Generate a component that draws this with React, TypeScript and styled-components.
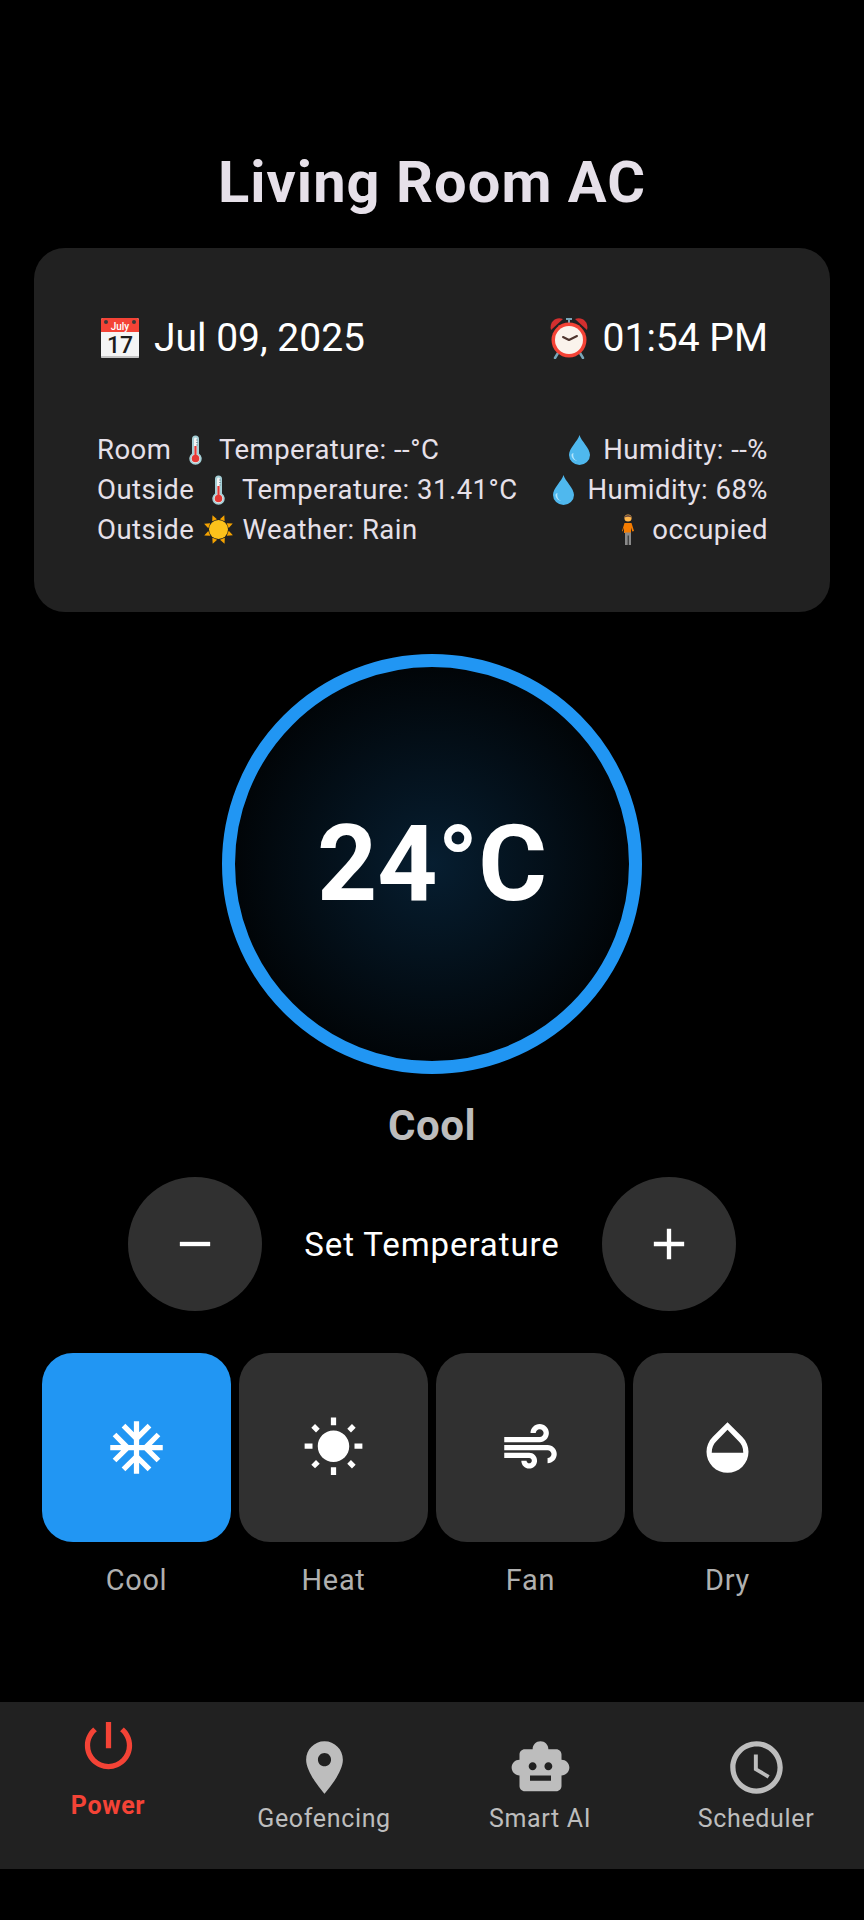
import type { FC, ReactNode } from 'react'
import styled, { createGlobalStyle } from 'styled-components'

const GlobalStyle = createGlobalStyle`
  html, body {
    margin: 0;
    padding: 0;
    background: #000;
  }
  body {
    font-family: Roboto, "Noto Sans", sans-serif;
  }
`

const ICONS = {
  snow: 'M22 11h-4.17l3.24-3.24-1.41-1.42L15 11h-2V9l4.66-4.66-1.42-1.41L13 6.17V2h-2v4.17L7.76 2.93 6.34 4.34 11 9v2H9L4.34 6.34 2.93 7.76 6.17 11H2v2h4.17l-3.24 3.24 1.41 1.42L9 13h2v2l-4.66 4.66 1.42 1.41L11 17.83V22h2v-4.17l3.24 3.24 1.42-1.41L13 15v-2h2l4.66 4.66 1.41-1.42L17.83 13H22z',
  sun: 'M6.76 4.84l-1.8-1.79-1.41 1.41 1.79 1.79 1.42-1.41zM4 10.5H1v2h3v-2zm9-9.95h-2V3.5h2V.55zm7.45 3.91l-1.41-1.41-1.79 1.79 1.41 1.41 1.79-1.79zm-3.21 13.7l1.79 1.8 1.41-1.41-1.8-1.79-1.4 1.4zM20 10.5v2h3v-2h-3zm-8-5c-3.31 0-6 2.69-6 6s2.69 6 6 6 6-2.69 6-6-2.69-6-6-6zm-1 16.95h2V19.5h-2v2.95zm-7.45-3.91l1.41 1.41 1.79-1.8-1.41-1.41-1.79 1.8z',
  air: 'M14.5 17c0 1.65-1.35 3-3 3s-3-1.35-3-3h2c0 .55.45 1 1 1s1-.45 1-1-.45-1-1-1H2v-2h9.5c1.65 0 3 1.35 3 3zM19 6.5C19 4.57 17.43 3 15.5 3S12 4.57 12 6.5h2c0-.83.67-1.5 1.5-1.5s1.5.67 1.5 1.5S16.33 8 15.5 8H2v2h13.5c1.93 0 3.5-1.57 3.5-3.5zm-.5 4.5H2v2h16.5c.83 0 1.5.67 1.5 1.5s-.67 1.5-1.5 1.5v2c1.93 0 3.5-1.57 3.5-3.5S20.43 11 18.5 11z',
  opacity: 'M17.66 8L12 2.35 6.34 8C4.78 9.56 4 11.64 4 13.64s.78 4.11 2.34 5.67 3.61 2.35 5.66 2.35 4.1-.79 5.66-2.35S20 15.64 20 13.64 19.22 9.56 17.66 8zM6 14c.01-2 .62-3.27 1.76-4.4L12 5.27l4.24 4.38C17.38 10.77 17.99 12 18 14H6z',
  power: 'M13 3h-2v10h2V3zm4.83 2.17l-1.42 1.42C17.99 7.86 19 9.81 19 12c0 3.87-3.13 7-7 7s-7-3.13-7-7c0-2.19 1.01-4.14 2.58-5.42L6.17 5.17C4.23 6.82 3 9.26 3 12c0 4.97 4.03 9 9 9s9-4.03 9-9c0-2.74-1.23-5.18-3.17-6.83z',
  pin: 'M12 2C8.13 2 5 5.13 5 9c0 5.25 7 13 7 13s7-7.75 7-13c0-3.87-3.13-7-7-7zm0 9.5c-1.38 0-2.5-1.12-2.5-2.5s1.12-2.5 2.5-2.5 2.5 1.12 2.5 2.5-1.12 2.5-2.5 2.5z',
  robot: 'M20 9V7c0-1.1-.9-2-2-2h-3c0-1.66-1.34-3-3-3S9 3.34 9 5H6c-1.1 0-2 .9-2 2v2c-1.66 0-3 1.34-3 3s1.34 3 3 3v4c0 1.1.9 2 2 2h12c1.1 0 2-.9 2-2v-4c1.66 0 3-1.34 3-3s-1.34-3-3-3zM7.5 11.5C7.5 10.67 8.17 10 9 10s1.5.67 1.5 1.5S9.83 13 9 13s-1.5-.67-1.5-1.5zM16 17H8v-2h8v2zm-1-4c-.83 0-1.5-.67-1.5-1.5S14.17 10 15 10s1.5.67 1.5 1.5S15.83 13 15 13z',
  clock: 'M11.99 2C6.47 2 2 6.48 2 12s4.47 10 9.99 10C17.52 22 22 17.52 22 12S17.52 2 11.99 2zM12 20c-4.42 0-8-3.58-8-8s3.58-8 8-8 8 3.58 8 8-3.58 8-8 8zm.5-13H11v6l5.25 3.15.75-1.23-4.5-2.67z',
  minus: 'M19 13H5v-2h14v2z',
  plus: 'M19 13h-6v6h-2v-6H5v-2h6V5h2v6h6v2z',
}

const Icon: FC<{ name: keyof typeof ICONS; size?: number }> = ({ name, size = 63 }) => (
  <svg width={size} height={size} viewBox="0 0 24 24" fill="currentColor">
    <path d={ICONS[name]} />
  </svg>
)

// no emoji font in the sandbox, so these are drawn
const CalendarEmoji = () => (
  <svg width="38" height="40" viewBox="0 0 38 40">
    <rect x="0" y="0" width="38" height="40" rx="2" fill="#f5f5f5" />
    <path d="M0 14V2a2 2 0 0 1 2-2h34a2 2 0 0 1 2 2v12z" fill="#f44336" />
    <rect x="0" y="38" width="38" height="2" rx="1" fill="#c4c4c4" />
    <circle cx="5" cy="4" r="2" fill="#3a3a3a" />
    <circle cx="33" cy="4" r="2" fill="#3a3a3a" />
    <CalendarMonth x="19" y="12">July</CalendarMonth>
    <CalendarDay x="19" y="35">17</CalendarDay>
  </svg>
)

const ClockEmoji = () => (
  <svg width="38" height="42" viewBox="0 0 38 42">
    <path d="M8 36l-3 5M30 36l3 5" stroke="#78a6b8" strokeWidth="2.5" strokeLinecap="round" />
    <path d="M1 13C-1 6 5-1 13 2z" fill="#d32f2f" />
    <path d="M37 13c2-7-4-14-12-11z" fill="#d32f2f" />
    <path d="M19 2v4M16 2h6" stroke="#78a6b8" strokeWidth="2" />
    <circle cx="19" cy="23" r="17.5" fill="#f44336" />
    <circle cx="19" cy="23" r="14" fill="#faf3ec" />
    <path d="M19 23l-6-3M19 23l8-4" stroke="#4e342e" strokeWidth="2" strokeLinecap="round" />
  </svg>
)

const ThermometerEmoji = () => (
  <svg width="13" height="30" viewBox="0 0 13 30">
    <path d="M3 4a3.500 3.500 0 0 1 7 0v14.500a6.200 6.200 0 1 1-7 0z" fill="#a5cfd6" />
    <path d="M5 4a1.500 1.500 0 0 1 3 0v15.500a4.400 4.400 0 1 1-3 0z" fill="#f5f5f5" />
    <rect x="5.400" y="11" width="2.200" height="10" fill="#e53935" />
    <circle cx="6.500" cy="23.500" r="3.800" fill="#e53935" />
    <path d="M7 5h2M7 7.500h2M7 10h2" stroke="#78909c" strokeWidth="0.8" />
  </svg>
)

const SunEmoji = () => (
  <svg width="31" height="31" viewBox="0 0 31 31">
    <g fill="#f5a300">
      {[0, 45, 90, 135, 180, 225, 270, 315].map((deg) => (
        <path key={deg} d="M15.500 0l2.600 5.500h-5.200z" transform={`rotate(${deg + 22} 15.500 15.500)`} />
      ))}
    </g>
    <circle cx="15.500" cy="15.500" r="9.500" fill="#fcc21b" />
  </svg>
)

const DropEmoji = () => (
  <svg width="21" height="30" viewBox="0 0 21 30">
    <path d="M10.500 0C9 6 0 13 0 20a10.500 10 0 0 0 21 0C21 13 12 6 10.500 0z" fill="#4fb8ee" />
    <path d="M4.500 18c-1 4 1 7 4 8-3.500-.5-6-3-6-6 0-1 1-2 2-2z" fill="#b3e5fc" />
  </svg>
)

const PersonEmoji = () => (
  <svg width="14" height="31" viewBox="0 0 14 31">
    <circle cx="7" cy="4" r="3.600" fill="#ffb74d" />
    <path d="M3.300 3.500C3.500 0 10.500 0 10.700 3.500 8 2.500 6 2.500 3.300 3.500z" fill="#6d4c41" />
    <path d="M3.500 9h7l2.500 8-1.700.5-1.300-4V19h-7v-5.500l-1.300 4L1 17z" fill="#f57c00" />
    <path d="M4 18.500h6V31H7.700V21.500h-1V31H4z" fill="#8a8a8a" />
  </svg>
)

const Page = styled.div`
  width: 864px;
  height: 1920px;
  display: flex;
  flex-direction: column;
  align-items: center;
  background: #000;
  overflow: hidden;
`

const Title = styled.h1`
  margin: 148px 0 0;
  height: 100px;
  font-size: 57.75px;
  line-height: 68px;
  font-weight: 700;
  letter-spacing: 1.05px;
  color: #e6e0e9;
`

const Card = styled.section`
  box-sizing: border-box;
  width: 796px;
  height: 364px;
  padding: 66px 62px 0 63px;
  background: #212121;
  border-radius: 31px;
  flex-shrink: 0;
`

const DateRow = styled.div`
  display: flex;
  justify-content: space-between;
  height: 48px;
  margin-bottom: 67.5px;
  font-size: 39px;
  line-height: 48px;
  color: #fff;
`

const DateCell = styled.div<{ $inset?: number }>`
  display: flex;
  align-items: center;
  gap: 15px;
  padding-left: ${(p) => p.$inset ?? 0}px;
`

const CalendarMonth = styled.text`
  font-family: Roboto, sans-serif;
  font-size: 10px;
  font-weight: 500;
  fill: #fff;
  text-anchor: middle;
`

const CalendarDay = styled.text`
  font-family: Roboto, sans-serif;
  font-size: 23px;
  font-weight: 500;
  fill: #1c1c1c;
  text-anchor: middle;
`

const InfoRow = styled.div`
  display: flex;
  justify-content: space-between;
  height: 40px;
  font-size: 27.5px;
  line-height: 40px;
  letter-spacing: 0.48px;
  color: #e6e0e9;
`

const InfoCell = styled.div`
  display: flex;
  align-items: center;
  white-space: pre;
`

const EmojiSlot = styled.span<{ $width: number }>`
  display: inline-flex;
  justify-content: center;
  align-items: center;
  width: ${(p) => p.$width}px;
  height: 40px;
`

const Dial = styled.div`
  box-sizing: border-box;
  width: 420px;
  height: 420px;
  margin-top: 42px;
  flex-shrink: 0;
  display: flex;
  align-items: center;
  justify-content: center;
  border: 13px solid #2196f3;
  border-radius: 50%;
  background: radial-gradient(circle closest-side, rgba(33, 150, 243, 0.2), rgba(33, 150, 243, 0.03));
  font-size: 105px;
  font-weight: 700;
  color: #fff;
`

const ModeName = styled.div`
  margin-top: 27px;
  height: 50px;
  font-size: 42px;
  line-height: 50px;
  font-weight: 700;
  letter-spacing: 0.5px;
  color: #bdbdbd;
`

const Stepper = styled.div`
  display: flex;
  align-items: center;
  justify-content: center;
  gap: 42px;
  margin-top: 26px;
`

const RoundButton = styled.button`
  width: 134px;
  height: 134px;
  padding: 0;
  border: 0;
  border-radius: 50%;
  background: #303030;
  color: #fff;
  display: flex;
  align-items: center;
  justify-content: center;
`

const StepperLabel = styled.div`
  font-size: 33px;
  color: #fff;
  letter-spacing: 0.9px;
`

const ModeGrid = styled.div`
  display: grid;
  grid-template-columns: repeat(4, 189px);
  gap: 8px;
  margin-top: 42px;
`

const ModeItem = styled.div`
  display: flex;
  flex-direction: column;
  align-items: center;
`

const ModeTile = styled.div<{ $active?: boolean }>`
  width: 189px;
  height: 189px;
  border-radius: 31px;
  display: flex;
  align-items: center;
  justify-content: center;
  background: ${(p) => (p.$active ? '#2196f3' : '#303030')};
  color: #fff;
`

const ModeLabel = styled.div`
  margin-top: 20px;
  font-size: 28.9px;
  line-height: 36px;
  letter-spacing: 0.7px;
  color: #b0b0b0;
`

const BottomNav = styled.nav`
  display: grid;
  grid-template-columns: repeat(4, 216px);
  width: 864px;
  height: 167px;
  margin-top: auto;
  margin-bottom: 51px;
  background: #212121;
  flex-shrink: 0;
`

const NavItem = styled.div<{ $active?: boolean }>`
  display: flex;
  flex-direction: column;
  align-items: center;
  padding-top: ${(p) => (p.$active ? 12 : 34)}px;
  color: ${(p) => (p.$active ? '#f44336' : '#bdbdbd')};
  svg {
    display: block;
  }
`

const NavLabel = styled.div<{ $active?: boolean }>`
  margin-top: ${(p) => (p.$active ? 13 : 4)}px;
  font-size: 25px;
  line-height: 32px;
  letter-spacing: 0.66px;
  font-weight: ${(p) => (p.$active ? 700 : 400)};
`

const MODES = [
  { label: 'Cool', icon: 'snow', active: true },
  { label: 'Heat', icon: 'sun' },
  { label: 'Fan', icon: 'air' },
  { label: 'Dry', icon: 'opacity' },
] as const

const NAV = [
  { label: 'Power', icon: 'power', active: true },
  { label: 'Geofencing', icon: 'pin' },
  { label: 'Smart AI', icon: 'robot' },
  { label: 'Scheduler', icon: 'clock' },
] as const

const Emoji: FC<{ width?: number; children: ReactNode }> = ({ width = 33.5, children }) => (
  <EmojiSlot $width={width}>{children}</EmojiSlot>
)

const App: FC = () => (
  <Page>
    <GlobalStyle />
    <Title>Living Room AC</Title>
    <Card>
      <DateRow>
        <DateCell $inset={4}>
          <CalendarEmoji />
          Jul 09, 2025
        </DateCell>
        <DateCell>
          <ClockEmoji />
          01:54 PM
        </DateCell>
      </DateRow>
      <InfoRow>
        <InfoCell>
          Room <Emoji><ThermometerEmoji /></Emoji> Temperature: --°C
        </InfoCell>
        <InfoCell>
          <Emoji><DropEmoji /></Emoji> Humidity: --%
        </InfoCell>
      </InfoRow>
      <InfoRow>
        <InfoCell>
          Outside <Emoji><ThermometerEmoji /></Emoji> Temperature: 31.41°C
        </InfoCell>
        <InfoCell>
          <Emoji><DropEmoji /></Emoji> Humidity: 68%
        </InfoCell>
      </InfoRow>
      <InfoRow>
        <InfoCell>
          Outside <Emoji><SunEmoji /></Emoji> Weather: Rain
        </InfoCell>
        <InfoCell>
          <Emoji><PersonEmoji /></Emoji> occupied
        </InfoCell>
      </InfoRow>
    </Card>
    <Dial>24°C</Dial>
    <ModeName>Cool</ModeName>
    <Stepper>
      <RoundButton>
        <Icon name="minus" size={52} />
      </RoundButton>
      <StepperLabel>Set Temperature</StepperLabel>
      <RoundButton>
        <Icon name="plus" size={52} />
      </RoundButton>
    </Stepper>
    <ModeGrid>
      {MODES.map((m) => (
        <ModeItem key={m.label}>
          <ModeTile $active={'active' in m}>
            <Icon name={m.icon} />
          </ModeTile>
          <ModeLabel>{m.label}</ModeLabel>
        </ModeItem>
      ))}
    </ModeGrid>
    <BottomNav>
      {NAV.map((n) => (
        <NavItem key={n.label} $active={'active' in n}>
          <Icon name={n.icon} />
          <NavLabel $active={'active' in n}>{n.label}</NavLabel>
        </NavItem>
      ))}
    </BottomNav>
  </Page>
)

export default App
